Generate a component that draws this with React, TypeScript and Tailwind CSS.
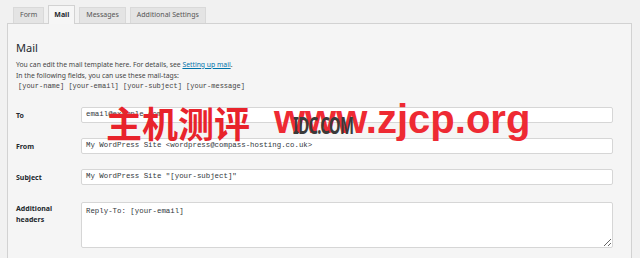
import React from 'react';

const sans = { fontFamily: '"Noto Sans", "Liberation Sans", sans-serif' };

function Tab({ label, active }: { label: string; active?: boolean }) {
  return (
    <div
      className={
        active
          ? 'h-[19px] px-[5px] flex items-center border border-b-0 border-[#d2d2d2] bg-[#f6f6f6] text-[7px] font-bold text-[#23282d] -mb-px relative z-10'
          : 'h-[16px] px-[6px] flex items-center border border-b-0 border-[#d9d9d9] bg-[#e4e4e4] text-[7px] text-[#555]'
      }
    >
      {label}
    </div>
  );
}

function Field({ label, value }: { label: React.ReactNode; value: string }) {
  return (
    <div className="flex items-center">
      <div className="w-[65px] shrink-0 text-[7px] font-bold text-[#23282d] leading-[11px]">{label}</div>
      <div className="w-[532px] h-[16px] flex items-center px-[4px] bg-white border border-[#d6d6d6] rounded-[2px] font-mono text-[7.4px] text-[#32373c]">
        {value}
      </div>
    </div>
  );
}

export default function App() {
  return (
    <div className="relative w-[640px] h-[258px] overflow-hidden bg-[#f1f1f1]" style={sans}>
      <div className="pl-[7px] pr-[8px]">
        {/* tabs */}
        <div className="h-[23px] flex items-end gap-[4px] pl-[6px]">
          <Tab label="Form" />
          <Tab label="Mail" active />
          <Tab label="Messages" />
          <Tab label="Additional Settings" />
        </div>

        {/* panel */}
        <div className="h-[260px] border border-[#d2d2d2] bg-[#f5f5f5] pl-[8px] pt-[17px]">
          <h2 className="text-[11px] leading-[14px] text-[#23282d]">Mail</h2>
          <div className="mt-[4px] text-[6.8px] leading-[11px] text-[#444]">
            <p>
              You can edit the mail template here. For details, see{' '}
              <span className="text-[#0073aa] underline">Setting up mail</span>.
            </p>
            <p>In the following fields, you can use these mail-tags:</p>
            <p className="font-mono text-[7px] pl-[2px]">
              [your-name] [your-email] [your-subject] [your-message]
            </p>
          </div>

          <div className="mt-[15px] flex flex-col gap-[15px]">
            <Field label="To" value="email@example.com" />
            <Field label="From" value="My WordPress Site <wordpress@compass-hosting.co.uk>" />
            <Field label="Subject" value={'My WordPress Site "[your-subject]"'} />
            <div className="flex items-start mt-[2px]">
              <div className="w-[65px] shrink-0 pt-[1px] text-[7px] font-bold text-[#23282d] leading-[11px]">
                Additional
                <br />
                headers
              </div>
              <textarea
                readOnly
                defaultValue="Reply-To: [your-email]"
                className="w-[532px] h-[46px] px-[4px] py-[3px] bg-white border border-[#d6d6d6] rounded-[2px] font-mono text-[7.4px] leading-[10px] text-[#32373c] outline-none"
              />
            </div>
          </div>
        </div>
      </div>

      {/* watermark */}
      <div
        className="absolute left-[106px] top-[99px] text-[36px] font-bold leading-[46px] text-[#e8232b]"
        style={{ fontFamily: '"Noto Sans CJK SC", sans-serif' }}
      >
        主机测评
      </div>
      <div
        className="absolute left-[274px] top-[94px] text-[40px] font-bold leading-[50px] text-[#ee2a33]"
        style={{ fontFamily: '"Liberation Sans", sans-serif' }}
      >
        www.zjcp.org
      </div>
      <div className="absolute left-[293px] top-[111px] text-[24px] font-bold leading-[28px] text-[#3a3a3a] tracking-[-1px] scale-x-[0.62] origin-left">
        IDC.COM
      </div>
    </div>
  );
}
